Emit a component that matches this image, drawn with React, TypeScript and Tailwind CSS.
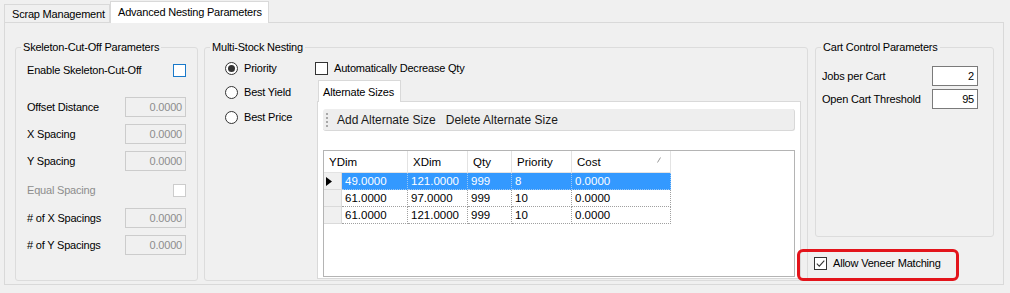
import React from "react";

type CheckTone = "normal" | "focus" | "disabled";

const Check = ({ checked, tone = "normal" }: { checked?: boolean; tone?: CheckTone }) => {
  const border =
    tone === "focus" ? "border-[#1979ca]" : tone === "disabled" ? "border-[#cccccc]" : "border-[#333333]";
  return (
    <span className={`flex h-[13px] w-[13px] shrink-0 items-center justify-center border bg-white ${border}`}>
      {checked && (
        <svg width="11" height="11" viewBox="0 0 11 11">
          <path d="M1.8 5.6 L4.3 8.1 L9.3 2.6" fill="none" stroke="#333333" strokeWidth="1.1" />
        </svg>
      )}
    </span>
  );
};

const Radio = ({ checked }: { checked?: boolean }) => (
  <span className="flex h-[13px] w-[13px] shrink-0 items-center justify-center rounded-full border border-[#333333] bg-white">
    {checked && <span className="h-[7px] w-[7px] rounded-full bg-[#333333]" />}
  </span>
);

const Field = ({ value, disabled }: { value: string; disabled?: boolean }) => (
  <div
    className={`flex h-[20px] items-center justify-end border pr-[3px] ${
      disabled ? "w-[61px] border-[#cccccc] bg-[#f0f0f0] text-[#8d8d8d]" : "w-[46px] border-[#7a7a7a] bg-white text-black"
    }`}
  >
    {value}
  </div>
);

const Row = ({ label, children, className = "", muted }: { label: string; children: React.ReactNode; className?: string; muted?: boolean }) => (
  <div className={`flex h-[20px] items-center justify-between ${className}`}>
    <span className={muted ? "text-[#8d8d8d]" : ""}>{label}</span>
    {children}
  </div>
);

const Group = ({ title, className = "", children }: { title: string; className?: string; children: React.ReactNode }) => (
  <fieldset className={`rounded-[3px] border border-[#dcdcdc] ${className}`}>
    <legend className="ml-[5px] px-[2px] leading-[14px]">{title}</legend>
    {children}
  </fieldset>
);

const rows = [
  ["49.0000", "121.0000", "999", "8", "0.0000"],
  ["61.0000", "97.0000", "999", "10", "0.0000"],
  ["61.0000", "121.0000", "999", "10", "0.0000"],
];
const colWidths = ["w-[66px]", "w-[60px]", "w-[44px]", "w-[60px]", "w-[99px]"];

const AlternateGrid = () => (
  <div className="mt-[19px] flex-1 border border-[#b4b4b4] bg-white text-[11.5px] tracking-normal">
    <div className="flex h-[22px]">
      {["YDim", "XDim", "Qty", "Priority", "Cost"].map((h, i) => (
        <div
          key={h}
          className={`relative flex items-center border-r border-b border-[#e3e3e3] pl-[5px] ${i === 0 ? "w-[84px]" : colWidths[i]}`}
        >
          {h}
          {h === "Cost" && (
            <svg className="absolute right-[9px] top-[6px]" width="4" height="6" viewBox="0 0 4 6">
              <path d="M0.5 5.5 L3.5 0.5" stroke="#9a9a9a" strokeWidth="1" />
            </svg>
          )}
        </div>
      ))}
    </div>
    {rows.map((r, ri) => (
      <div key={ri} className="flex h-[17px]">
        <div className="flex w-[18px] items-center border-r border-b border-[#dadada] bg-[#f0f0f0] pl-[2px]">
          {ri === 0 && (
            <svg width="6" height="9" viewBox="0 0 6 9">
              <path d="M0 0 L6 4.5 L0 9 Z" fill="#000000" />
            </svg>
          )}
        </div>
        {r.map((c, ci) => (
          <div
            key={ci}
            className={`flex items-center border-r border-b border-dotted pl-[3px] ${colWidths[ci]} ${
              ri === 0 ? "border-[#9cc7f2] bg-[#3399ff] text-white" : "border-[#a0a0a0]"
            }`}
          >
            {c}
          </div>
        ))}
      </div>
    ))}
  </div>
);

const App = () => {
  return (
    <div className="h-[293px] w-[1010px] overflow-hidden bg-[#f0f0f0] font-['Liberation_Sans',Arial,sans-serif] text-[11px] leading-[14px] tracking-[-0.2px] text-black">
      <div className="flex h-[22px] items-end pl-[4px]">
        <div className="flex h-[18px] w-[106px] items-center border border-b-0 border-[#d9d9d9] pl-[7px]">
          Scrap Management
        </div>
        <div className="relative z-10 -mb-px flex h-[22px] w-[159px] items-center border border-b-0 border-[#d9d9d9] bg-white pb-[2px] pl-[7px]">
          Advanced Nesting Parameters
        </div>
      </div>

      <div className="ml-[4px] flex h-[263px] w-[1000px] gap-[6px] border border-[#d9d9d9] pb-[3px] pl-[10px] pr-[9px] pt-[17px]">
        <Group title="Skeleton-Cut-Off Parameters" className="w-[183px]">
          <div className="flex flex-col pl-[11px] pr-[11px]">
            <Row label="Enable Skeleton-Cut-Off" className="mt-[6px]">
              <Check tone="focus" />
            </Row>
            <Row label="Offset Distance" className="mt-[17px]">
              <Field value="0.0000" disabled />
            </Row>
            <Row label="X Spacing" className="mt-[7px]">
              <Field value="0.0000" disabled />
            </Row>
            <Row label="Y Spacing" className="mt-[7px]">
              <Field value="0.0000" disabled />
            </Row>
            <Row label="Equal Spacing" className="mt-[9px]" muted>
              <Check tone="disabled" />
            </Row>
            <Row label="# of X Spacings" className="mt-[8px]">
              <Field value="0.0000" disabled />
            </Row>
            <Row label="# of Y Spacings" className="mt-[7px]">
              <Field value="0.0000" disabled />
            </Row>
          </div>
        </Group>

        <Group title="Multi-Stock Nesting" className="flex w-[604px] flex-col">
          <div className="flex w-full flex-1">
            <div className="flex w-[110px] flex-col pl-[20px]">
              <div className="mt-[4px] flex h-[20px] items-center gap-[6px]">
                <Radio checked />
                Priority
              </div>
              <div className="mt-[4px] flex h-[20px] items-center gap-[6px]">
                <Radio />
                Best Yield
              </div>
              <div className="mt-[5px] flex h-[20px] items-center gap-[6px]">
                <Radio />
                Best Price
              </div>
            </div>
            <div className="flex flex-1 flex-col pb-[1px] pr-[6px]">
              <div className="mt-[4px] flex h-[20px] items-center gap-[6px]">
                <Check />
                Automatically Decrease Qty
              </div>
              <div className="ml-[2px] mt-[2px] flex flex-1 flex-col">
                <div className="flex h-[21px] items-end">
                  <div className="relative z-10 -mb-px ml-[1px] flex h-[22px] w-[83px] items-center border border-b-0 border-[#d9d9d9] bg-white pl-[4px]">
                    Alternate Sizes
                  </div>
                </div>
                <div className="flex flex-1 flex-col border border-[#d9d9d9] bg-white px-[5px] pb-[1px] pt-[7px]">
                  <div className="flex h-[22px] items-center rounded-[3px] border-r border-b border-[#d8d8d8] bg-[#eeeeee] text-[12px] tracking-normal text-[#1a1a1a]">
                    <div className="ml-[3px] flex flex-col gap-[2px]">
                      <span className="h-[2px] w-[2px] bg-[#a8a8a8]" />
                      <span className="h-[2px] w-[2px] bg-[#a8a8a8]" />
                      <span className="h-[2px] w-[2px] bg-[#a8a8a8]" />
                      <span className="h-[2px] w-[2px] bg-[#a8a8a8]" />
                    </div>
                    <span className="ml-[9px]">Add Alternate Size</span>
                    <span className="ml-[10px]">Delete Alternate Size</span>
                  </div>
                  <AlternateGrid />
                </div>
              </div>
            </div>
          </div>
        </Group>

        <div className="flex w-[180px] flex-col">
          <Group title="Cart Control Parameters" className="ml-[1px] h-[197px]">
            <div className="flex flex-col pl-[6px] pr-[15px]">
              <Row label="Jobs per Cart" className="mt-[12px]">
                <Field value="2" />
              </Row>
              <Row label="Open Cart Threshold" className="mt-[3px]">
                <Field value="95" />
              </Row>
            </div>
          </Group>
          <div className="relative mt-[16px] flex h-[20px] items-center gap-[6px]">
            <Check checked />
            Allow Veneer Matching
            <span className="absolute left-[-17px] top-[-4px] h-[32px] w-[162px] rounded-[6px] border-[3px] border-[#e3141b]" />
          </div>
        </div>
      </div>
    </div>
  );
};

export default App;
